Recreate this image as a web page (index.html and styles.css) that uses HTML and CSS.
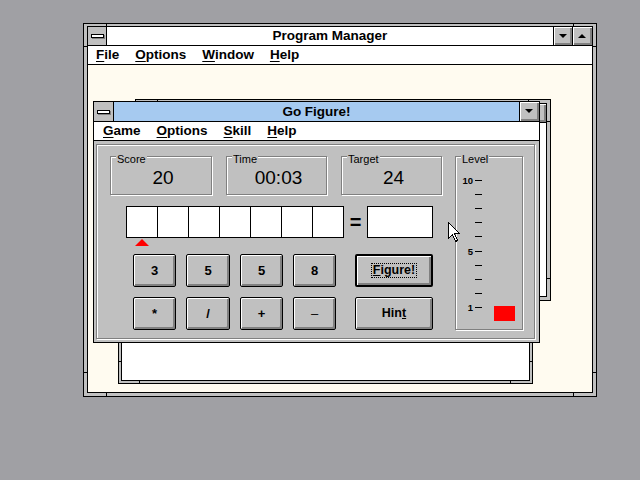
FILE: index.html
```html
<!DOCTYPE html>
<html lang="en">
<head>
<meta charset="utf-8">
<title>Go Figure!</title>
<link rel="stylesheet" href="styles.css">
</head>
<body>
<div class="desktop">

  <section class="win pm">
    <div class="win-inner">
      <div class="titlebar">
        <div class="sysmenu"><span class="sysbar"></span></div>
        <div class="title">Program Manager</div>
        <div class="tbtn"><span class="tri-down"></span></div>
        <div class="tbtn tbtn-wide"><span class="tri-up"></span></div>
      </div>
      <nav class="menubar">
        <span><u>F</u>ile</span>
        <span><u>O</u>ptions</span>
        <span><u>W</u>indow</span>
        <span><u>H</u>elp</span>
      </nav>
      <div class="client cream"></div>
    </div>
  </section>

  <section class="win grp-b">
    <div class="win-inner">
      <div class="titlebar">
        <div class="sysmenu"><span class="sysbar"></span></div>
        <div class="title"></div>
        <div class="tbtn"><span class="tri-down"></span></div>
        <div class="tbtn tbtn-wide"><span class="tri-up"></span></div>
      </div>
      <div class="client white"></div>
    </div>
  </section>

  <section class="win grp-a">
    <div class="win-inner">
      <div class="titlebar">
        <div class="sysmenu"><span class="sysbar"></span></div>
        <div class="title"></div>
        <div class="tbtn"><span class="tri-down"></span></div>
        <div class="tbtn tbtn-wide"><span class="tri-up"></span></div>
      </div>
      <div class="client white"></div>
    </div>
  </section>

  <section class="gf">
    <div class="titlebar">
      <div class="sysmenu"><span class="sysbar"></span></div>
      <div class="title">Go Figure!</div>
      <div class="tbtn"><span class="tri-down"></span></div>
    </div>
    <nav class="menubar">
      <span><u>G</u>ame</span>
      <span><u>O</u>ptions</span>
      <span><u>S</u>kill</span>
      <span><u>H</u>elp</span>
    </nav>
    <div class="gf-client">
      <div class="panel">
        <div class="leftcol">
          <div class="stats">
            <div class="group stat"><span class="gb-label">Score</span><div class="value">20</div></div>
            <div class="group stat"><span class="gb-label">Time</span><div class="value">00:03</div></div>
            <div class="group stat"><span class="gb-label">Target</span><div class="value">24</div></div>
          </div>
          <div class="eqrow">
            <div class="cells">
              <div class="cell"></div><div class="cell"></div><div class="cell"></div><div class="cell"></div><div class="cell"></div><div class="cell"></div><div class="cell"></div>
            </div>
            <div class="eq">=</div>
            <div class="result"></div>
          </div>
          <div class="caret"></div>
          <div class="keys">
            <div class="key">3</div>
            <div class="key">5</div>
            <div class="key">5</div>
            <div class="key">8</div>
            <div class="key key-wide key-default"><span class="focus"><u>F</u>igure!</span></div>
            <div class="key">*</div>
            <div class="key">/</div>
            <div class="key">+</div>
            <div class="key key-thin">–</div>
            <div class="key key-wide"><span class="plain">Hin<u>t</u></span></div>
          </div>
        </div>
        <div class="group level">
          <span class="gb-label">Level</span>
          <div class="ticks">
            <div class="tick"><span class="tnum">10</span><span class="tdash"></span></div>
            <div class="tick"><span class="tnum"></span><span class="tdash"></span></div>
            <div class="tick"><span class="tnum"></span><span class="tdash"></span></div>
            <div class="tick"><span class="tnum"></span><span class="tdash"></span></div>
            <div class="tick"><span class="tnum"></span><span class="tdash"></span></div>
            <div class="tick"><span class="tnum">5</span><span class="tdash"></span></div>
            <div class="tick"><span class="tnum"></span><span class="tdash"></span></div>
            <div class="tick"><span class="tnum"></span><span class="tdash"></span></div>
            <div class="tick"><span class="tnum"></span><span class="tdash"></span></div>
            <div class="tick"><span class="tnum">1</span><span class="tdash"></span><span class="lvl-mark"></span></div>
          </div>
        </div>
      </div>
    </div>
  </section>

  <svg class="cursor" width="13" height="21" viewBox="0 0 13 21" aria-hidden="true">
    <path d="M0.5 0.5 V16.5 L4.5 12.5 L7.5 19.5 L9.5 18.5 L6.5 11.5 H11.5 Z" fill="#fff" stroke="#000" stroke-width="1" stroke-linejoin="miter"/>
  </svg>

</div>
</body>
</html>
```

FILE: styles.css
```css
* { box-sizing: border-box; }
html, body { margin: 0; padding: 0; }
body {
  background: #a0a0a4;
  font-family: "Liberation Sans", Arial, sans-serif;
  color: #000;
}
.desktop { position: relative; width: 640px; height: 480px; overflow: hidden; }

/* resizable frame windows */
.win {
  position: absolute;
  display: flex;
  border: 1px solid #000;
  background-color: #c0c0c0;
  background-image: linear-gradient(#000, #000), linear-gradient(#000, #000),
                    linear-gradient(#000, #000), linear-gradient(#000, #000);
  background-repeat: no-repeat;
  background-size: 1px 100%, 1px 100%, 100% 1px, 100% 1px;
}
.win-inner {
  flex: 1;
  min-width: 0;
  display: flex;
  flex-direction: column;
  border: 1px solid #000;
  overflow: hidden;
}
.pm {
  left: 83px; top: 23px; width: 514px; height: 374px;
  padding: 2px 3px 3px;
  background-position: 22px 0, 489px 0, 0 22px, 0 348px;
}
.grp-a {
  left: 135px; top: 99px; width: 416px; height: 202px;
  padding: 3px;
  background-position: 21px 0, 392px 0, 0 21px, 0 178px;
}
.grp-b {
  left: 118px; top: 160px; width: 415px; height: 224px;
  padding: 2px;
  background-position: 20px 0, 391px 0, 0 20px, 0 200px;
}

/* title bars */
.titlebar {
  flex: none;
  display: flex;
  height: 19px;
  border-bottom: 1px solid #000;
  background: #fff;
}
.sysmenu {
  flex: none;
  width: 19px;
  border-right: 1px solid #000;
  background: #c0c0c0;
  display: flex;
  align-items: center;
  justify-content: center;
}
.sysbar {
  width: 13px;
  height: 4px;
  border: 1px solid #000;
  background: #fff;
  box-shadow: 1px 1px 0 #808080;
}
.title {
  flex: 1;
  min-width: 0;
  text-align: center;
  font-weight: bold;
  font-size: 13.5px;
  line-height: 18px;
  white-space: nowrap;
  overflow: hidden;
}
.tbtn {
  flex: none;
  width: 19px;
  border-left: 1px solid #000;
  background: #c0c0c0;
  box-shadow: inset 1px 1px 0 #fff, inset -2px -2px 0 #808080;
  display: flex;
  align-items: center;
  justify-content: center;
}
.tbtn-wide { width: 20px; }
.tri-down {
  width: 0; height: 0;
  border-left: 4px solid transparent;
  border-right: 4px solid transparent;
  border-top: 4px solid #000;
  margin: 0 1px 1px 0;
}
.tri-up {
  width: 0; height: 0;
  border-left: 4px solid transparent;
  border-right: 4px solid transparent;
  border-bottom: 4px solid #000;
  margin: 0 1px 1px 0;
}

/* menus */
.menubar {
  flex: none;
  display: flex;
  gap: 16px;
  height: 19px;
  padding-left: 8px;
  border-bottom: 1px solid #000;
  background: #fff;
  font-weight: bold;
  font-size: 13.5px;
  line-height: 18px;
  white-space: nowrap;
}
.menubar u { text-underline-offset: 2px; }

.client { flex: 1; }
.cream { background: #fffbf0; }
.white { background: #fff; }

/* Go Figure window */
.gf {
  position: absolute;
  left: 93px; top: 101px; width: 447px; height: 242px;
  border: 1px solid #000;
  background: #c0c0c0;
  display: flex;
  flex-direction: column;
}
.gf .titlebar { height: 20px; background: #a6caf0; }
.gf .sysmenu { width: 20px; }
.gf .title { line-height: 19px; }
.gf .tbtn { width: 20px; }
.gf .menubar { padding-left: 9px; }

.gf-client {
  flex: 1;
  display: flex;
  padding: 3px 4px 3px 2px;
}
.panel {
  flex: 1;
  display: flex;
  gap: 13px;
  padding: 11px 0 0 13px;
  border: 1px solid #808080;
  box-shadow: inset 1px 1px 0 #fff, 1px 1px 0 #fff;
}
.leftcol {
  display: flex;
  flex-direction: column;
  align-items: flex-start;
}
.group {
  border: 1px solid #808080;
  box-shadow: inset 1px 1px 0 #fff, 1px 1px 0 #fff;
}
.gb-label {
  display: block;
  width: max-content;
  margin: -4px 0 0 5px;
  padding: 0 1px;
  background: #c0c0c0;
  font-size: 11px;
  line-height: 13px;
}
.stats {
  display: grid;
  grid-template-columns: 102px 101px 101px;
  column-gap: 14px;
}
.stat { height: 39px; }
.value {
  margin-top: 1px;
  padding-left: 4px;
  text-align: center;
  font-size: 19px;
  line-height: 22px;
}

.eqrow {
  display: flex;
  align-items: center;
  margin: 11px 0 0 16px;
}
.cells {
  display: flex;
  height: 32px;
  border: 1px solid #000;
  border-right: 0;
  background: #fff;
}
.cell { width: 31px; border-right: 1px solid #000; }
.eq {
  width: 23px;
  text-align: center;
  font-weight: bold;
  font-size: 20px;
  line-height: 30px;
}
.result {
  width: 66px;
  height: 32px;
  border: 1px solid #000;
  background: #fff;
}
.caret {
  width: 0; height: 0;
  border-left: 7px solid transparent;
  border-right: 7px solid transparent;
  border-bottom: 7px solid #f00;
  margin: 1px 0 0 25px;
}

.keys {
  display: grid;
  grid-template-columns: 43px 44px 43px 43px 87px;
  grid-auto-rows: 33px;
  gap: 10px;
  margin: 8px 0 0 23px;
}
.key {
  display: flex;
  align-items: center;
  justify-content: center;
  border: 1px solid #000;
  border-radius: 2px;
  background: #c0c0c0;
  box-shadow: inset 1px 1px 0 #fff, inset -2px -2px 0 #808080;
  font-weight: bold;
  font-size: 13px;
  line-height: 15px;
  padding-bottom: 1px;
}
.key-thin { font-weight: normal; }
.key-wide { width: 78px; margin-left: 9px; font-size: 12.5px; }
.key-default { border-width: 2px; }
.focus {
  border: 1px dotted #000;
  padding: 0 1px;
  line-height: 13px;
}
.plain { line-height: 13px; }

.level { flex: none; width: 68px; height: 174px; }
.ticks { margin: 7px 0 0 6px; }
.tick {
  display: flex;
  align-items: center;
  height: 14.2px;
}
.tnum {
  width: 11px;
  text-align: right;
  font-weight: bold;
  font-size: 9.5px;
  line-height: 9px;
}
.tdash {
  width: 7px;
  height: 1px;
  margin-left: 2px;
  background: #000;
}
.lvl-mark {
  align-self: flex-start;
  width: 21px;
  height: 15px;
  margin: 5px 0 0 12px;
  background: #f00;
}

.cursor {
  position: absolute;
  left: 448px;
  top: 222px;
  shape-rendering: crispEdges;
}
```
